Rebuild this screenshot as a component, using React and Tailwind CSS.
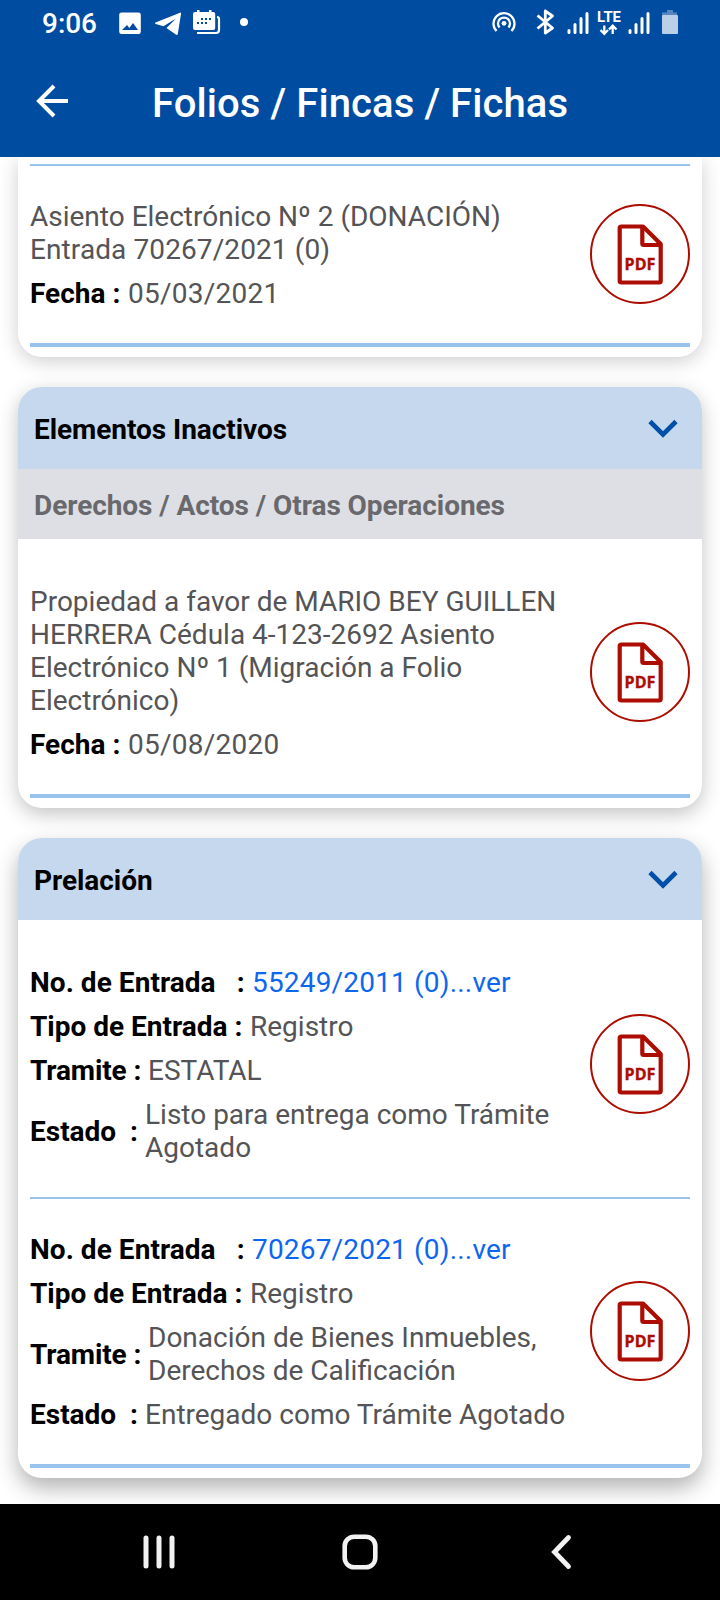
import React from 'react';

function StatusBar() {
  return (
    <div className="flex h-[46px] w-full shrink-0">
      <svg width="720" height="46" viewBox="0 0 720 46" fill="none">
        <text x="42" y="33" fill="#fff" fontFamily="Roboto" fontWeight="500" fontSize="28" textLength="55" lengthAdjust="spacingAndGlyphs">9:06</text>
        <path fill="#fff" fillRule="evenodd" d="M121.500 12.500h17a2.300 2.300 0 0 1 2.300 2.300v17a2.300 2.300 0 0 1-2.300 2.300h-17a2.300 2.300 0 0 1-2.300-2.300v-17a2.300 2.300 0 0 1 2.300-2.300zM122 30h16l-5-7-3.700 5-2.300-3z" />
        <path fill="#fff" d="M155.500 22.500 180 12.700q1.300-.4 1 1.200l-3.200 20q-.5 1.600-2 .7l-9.300-6.500 9.500-9.500-12.500 7.600-7.800-2.300q-1.600-.7-.2-1.400z" />
        <path fill="#fff" d="M195 12h2v-2h2.500v2h9.500v-2h2.500v2h1.700q2 0 2 2v14q0 2-2 2H195q-2 0-2-2V14q0-2 2-2z" />
        <path fill="#004ca1" d="M201 18h2v2h-2zm4 0h2v2h-2zm4 0h2v2h-2zM197 22h2v2h-2zm4 0h2v2h-2zm4 0h2v2h-2z" />
        <path stroke="#fff" strokeWidth="2.200" d="M217 17q2 0 2 2v11q0 3-3 3h-19" />
        <circle cx="244" cy="22" r="4" fill="#fff" />
        <g stroke="#fff" strokeWidth="2.300">
          <path d="M496.500 31a10.500 10.500 0 1 1 15 0M499.500 27.500a6 6 0 1 1 9 0" />
        </g>
        <circle cx="504" cy="23.300" r="2.400" fill="#fff" />
        <path stroke="#fff" strokeWidth="2.800" strokeLinejoin="round" d="m537.500 15.500 15 12.500-7.200 5V11l7.200 5-15 12.500" />
        <g stroke="#fff" strokeWidth="3" strokeLinecap="round">
          <path d="M569 30.500v2M575 24.500v8M581 18.500v14M587 13.500v19M630 30.500v2M636 24.500v8M642 18.500v14M648 13.500v19" />
        </g>
        <text x="597" y="21.500" fill="#fff" fontFamily="Roboto" fontWeight="700" fontSize="15" textLength="24" lengthAdjust="spacingAndGlyphs">LTE</text>
        <path stroke="#fff" strokeWidth="2.300" d="M604.300 25.500v8M600.500 30l3.800 3.800L608 30M612.700 34v-8M609 29.500l3.700-3.800 3.800 3.800" />
        <path fill="#5487c0" d="M667 10h6v2.500h4V15h-15v-2.500h5z" />
        <rect x="662" y="15" width="16" height="19" rx="1" fill="#bccfe8" />
      </svg>
    </div>
  );
}

function PdfButton() {
  return (
    <button className="mb-[2px] flex size-[100px] shrink-0 items-center justify-center rounded-full border-2 border-[#ad0c00]">
      <svg className="shrink-0" width="100" height="100" viewBox="0 0 100 100" fill="none">
        <g stroke="#ad0c00" strokeWidth="4.200" strokeLinejoin="round">
          <path d="M31.500 22.500H53L70.700 40v37q0 1.500-1.500 1.500H31.500Q29.700 78.500 29.700 77V24q0-1.500 1.800-1.500z" />
          <path d="M52.300 23v16.500q0 1.500 1.500 1.500h16.500" />
        </g>
        <text x="34.600" y="65.800" fill="#ad0c00" stroke="#ad0c00" strokeWidth="0.300" fontFamily="Noto Sans" fontWeight="700" fontSize="15.300" textLength="30.800" lengthAdjust="spacingAndGlyphs">PDF</text>
      </svg>
    </button>
  );
}

function Row({ label, labelClass, children, valueClass = '' }) {
  return (
    <div className="flex items-center">
      <span className={'shrink-0 whitespace-pre font-bold text-black ' + labelClass}>{label}</span>
      <span className={'whitespace-nowrap ' + valueClass}>{children}</span>
    </div>
  );
}

function Item({ children, last }) {
  return (
    <div className={'mx-3 flex items-center justify-between border-[#98c3ed] pt-[34px] pb-[33px] ' + (last ? 'border-b-4' : 'border-b-2')}>
      <div className="flex flex-col gap-[11px] text-[28px] leading-[33px] text-[#545456]">{children}</div>
      <PdfButton />
    </div>
  );
}

function CardHeader({ title }) {
  return (
    <div className="flex h-[82px] items-center justify-between bg-[#c6d8ed] pr-6 pl-4">
      <h2 className="pt-[2px] text-[28px] leading-[33px] font-bold tracking-[-0.06px] text-black">{title}</h2>
      <svg width="30" height="20" viewBox="0 0 30 20" fill="none">
        <path d="m2 3.500 13 13 13-13" stroke="#004fa8" strokeWidth="4.600" />
      </svg>
    </div>
  );
}

const cardBase = 'shrink-0 bg-white ';
const linkClass = 'text-[#0d67ee] tracking-[0.18px]';
const dateClass = 'tracking-[0.25px]';

export default function App() {
  return (
    <div className="flex h-[1600px] w-[720px] flex-col overflow-hidden bg-white font-[Roboto,sans-serif]">
      <header className="relative z-10 flex h-[157px] shrink-0 flex-col bg-[#004ca1]">
        <StatusBar />
        <div className="flex flex-1 items-center pl-9">
          <svg className="-mt-[1px]" width="33" height="34" viewBox="0 0 33 34" fill="none">
            <path d="M18 2 3 17l15 15M3 17h29" stroke="#fff" strokeWidth="4" />
          </svg>
          <h1 className="mt-[5px] ml-[83px] text-[40px] leading-[48px] font-medium tracking-[0.09px] whitespace-nowrap text-white">Folios / Fincas / Fichas</h1>
        </div>
      </header>

      <main className="flex h-[1347px] shrink-0 flex-col gap-[30px] overflow-hidden px-[18px]">
        <section className={cardBase + 'rounded-b-3xl pb-[10px] shadow-[0_4px_20px_rgba(0,0,0,0.2)]'}>
          <div className="mx-3 h-[9px] border-b-2 border-[#98c3ed]" />
          <Item last>
            <p className="whitespace-nowrap">Asiento Electrónico Nº 2 (DONACIÓN)<br /><span className="tracking-[0.1px]">Entrada 70267/2021 (0)</span></p>
            <Row label="Fecha :" labelClass="w-[98px]" valueClass={dateClass}>05/03/2021</Row>
          </Item>
        </section>

        <section className={cardBase + 'rounded-3xl pb-[10px] shadow-[0_6px_20px_rgba(0,0,0,0.24)]'}>
          <div className="overflow-hidden rounded-t-3xl">
            <CardHeader title="Elementos Inactivos" />
            <h3 className="flex h-[70px] items-center bg-[#dedfe4] pt-[2px] pl-4 text-[28px] leading-[33px] font-bold tracking-[-0.06px] text-[#69696d]">Derechos / Actos / Otras Operaciones</h3>
          </div>
          <div className="pt-3">
            <Item last>
              <p className="whitespace-nowrap">Propiedad a favor de MARIO BEY GUILLEN<br />HERRERA Cédula 4-123-2692 Asiento<br />Electrónico Nº 1 (Migración a Folio<br />Electrónico)</p>
              <Row label="Fecha :" labelClass="w-[98px]" valueClass={dateClass}>05/08/2020</Row>
            </Item>
          </div>
        </section>

        <section className={cardBase + 'rounded-3xl pb-[10px] shadow-[0_10px_22px_rgba(0,0,0,0.3)]'}>
          <div className="overflow-hidden rounded-t-3xl">
            <CardHeader title="Prelación" />
          </div>
          <div className="pt-3">
            <Item>
              <Row label="No. de Entrada   :" labelClass="w-[222px] tracking-[0.05px]" valueClass={linkClass}>55249/2011 (0)...ver</Row>
              <Row label="Tipo de Entrada :" labelClass="w-[220px]">Registro</Row>
              <Row label="Tramite :" labelClass="w-[118px] tracking-[-0.12px]">ESTATAL</Row>
              <Row label="Estado  :" labelClass="w-[115px]">Listo para entrega como Trámite<br />Agotado</Row>
            </Item>
            <Item last>
              <Row label="No. de Entrada   :" labelClass="w-[222px] tracking-[0.05px]" valueClass={linkClass}>70267/2021 (0)...ver</Row>
              <Row label="Tipo de Entrada :" labelClass="w-[220px]">Registro</Row>
              <Row label="Tramite :" labelClass="w-[118px] tracking-[-0.12px]">Donación de Bienes Inmuebles,<br />Derechos de Calificación</Row>
              <Row label="Estado  :" labelClass="w-[115px]">Entregado como Trámite Agotado</Row>
            </Item>
          </div>
        </section>
      </main>

      <nav className="flex h-24 shrink-0 items-center bg-black">
        <svg width="720" height="96" viewBox="0 0 720 96" fill="none" stroke="#f2f2f2">
          <path strokeWidth="5" strokeLinecap="round" d="M146 34v28M159 34v28M172 34v28" />
          <rect x="344.700" y="32.700" width="30.600" height="30.600" rx="9.500" strokeWidth="4.600" />
          <path strokeWidth="4.800" strokeLinecap="round" d="M568.500 33.500 554.500 48l14 14.500" />
        </svg>
      </nav>
    </div>
  );
}
